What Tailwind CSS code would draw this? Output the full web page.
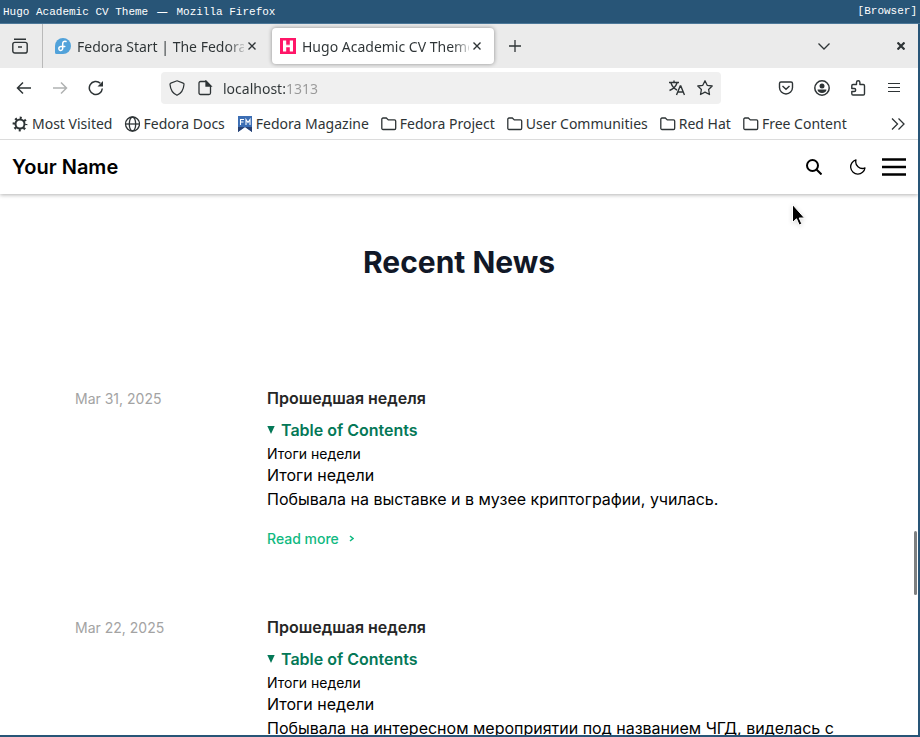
<!DOCTYPE html>
<html lang="en">
<head>
<meta charset="utf-8">
<title>Hugo Academic CV Theme</title>
<script src="https://cdn.jsdelivr.net/npm/@tailwindcss/browser@4"></script>
</head>
<body class="h-screen overflow-hidden bg-[#285577] font-['Noto_Sans',sans-serif] text-[#2e3436]">
<svg class="hidden" aria-hidden="true">
  <symbol id="folder" viewBox="0 0 16 16"><path d="M.8 12.300V3.200c0-.7.5-1.200 1.200-1.200h3.300l2 1.900H13.500c.7 0 1.200.5 1.200 1.200v7.200c0 .7-.5 1.200-1.200 1.200H2c-.7 0-1.200-.5-1.200-1.200z" fill="none" stroke="currentColor" stroke-width="1.300"/></symbol>
  <symbol id="close" viewBox="0 0 8 8"><path d="M.5.5l7 7M7.500.500l-7 7" stroke="currentColor" stroke-width="1.400"/></symbol>
</svg>
<div class="flex h-full flex-col">
  <header class="flex h-6 shrink-0 items-center justify-between border-b border-[#4c7899] px-[3px] font-['Liberation_Mono',monospace] text-[11px] leading-none text-white">
    <div>Hugo Academic CV Theme <span class="px-0.5 font-['Noto_Sans',sans-serif]">—</span> Mozilla Firefox</div>
    <div>[Browser]</div>
  </header>

  <div class="relative mr-[2px] mb-[2px] flex min-h-0 flex-1 flex-col overflow-hidden bg-white">
    <div class="flex h-11 shrink-0 items-center bg-[#ebebeb] text-sm">
      <button class="flex h-full w-[43px] items-center justify-center border-r border-[#b9b9b9] pr-0.5" aria-label="Recent browsing">
        <svg class="size-4" viewBox="0 0 16 16" fill="none" stroke="currentColor" stroke-width="1.400"><path d="M2 1.200h12M.8 6.500c0-1.200.9-2.100 2.100-2.100h10.200c1.200 0 2.100.9 2.100 2.100v6.400c0 1.200-.9 2.100-2.100 2.100H2.900c-1.200 0-2.100-.9-2.100-2.100zM6 9h4"/></svg>
      </button>
      <div class="ml-1 flex h-9 w-[221px] items-center pr-3 pl-2">
        <svg class="size-4 shrink-0" viewBox="0 0 16 16"><path d="M8 0a8 8 0 1 1 0 16H1.500A1.500 1.500 0 0 1 0 14.500V8a8 8 0 0 1 8-8z" fill="#51a2da"/><path d="M11 3.500c-1.900-.6-3.300.4-3.300 2.200v4.500c0 1.600-1.200 2.500-2.500 2.200C3.500 12 3.300 9.500 5 8.700c.6-.3 1-.2 1.500-.2h3.300" fill="none" stroke="#fff" stroke-width="1.500" stroke-linecap="round"/></svg>
        <a href="#" class="ml-1.5 min-w-0 flex-1 overflow-hidden bg-[linear-gradient(90deg,#2e3436_90%,#2e343633)] bg-clip-text pt-0.5 whitespace-nowrap text-transparent">Fedora Start | The Fedora</a>
        <button class="ml-1" aria-label="Close tab"><svg class="size-2"><use href="#close"/></svg></button>
      </div>
      <div class="ml-1 flex h-9 w-[222px] items-center rounded bg-white pr-[13px] pl-2 shadow-[0_0_4px_rgba(0,0,0,0.4)]">
        <svg class="size-4 shrink-0" viewBox="0 0 16 16"><path d="M0 0h16v16H0z" fill="#ff1668"/><path d="M3 2.500h3.200v4.300h3.600V2.500H13v11H9.800V9.200H6.200v4.300H3z" fill="#fff"/><path d="M6.200 7.300h3.600" stroke="#ff8fb5" stroke-width=".5"/></svg>
        <a href="#" aria-current="page" class="ml-1.5 min-w-0 flex-1 overflow-hidden bg-[linear-gradient(90deg,#2e3436_90%,#2e343633)] bg-clip-text pt-0.5 whitespace-nowrap text-transparent">Hugo Academic CV Theme</a>
        <button class="ml-1" aria-label="Close tab"><svg class="size-2"><use href="#close"/></svg></button>
      </div>
      <button class="ml-[15px]" aria-label="New tab"><svg class="size-3" viewBox="0 0 12 12" stroke="currentColor" stroke-width="1.300"><path d="M6 0v12M0 6h12"/></svg></button>
      <button class="ml-auto" aria-label="List all tabs"><svg class="h-[7px] w-3" viewBox="0 0 12 7" fill="none" stroke="currentColor" stroke-width="1.300"><path d="M.5.5L6 6l5.500-5.500"/></svg></button>
      <button class="mr-[13px] ml-[67px]" aria-label="Close window"><svg class="size-2" viewBox="0 0 8 8" stroke="currentColor" stroke-width="2.200"><path d="M.5.5l7 7M7.500.500l-7 7"/></svg></button>
    </div>

    <div class="flex h-10 shrink-0 items-center px-1.5">
      <button class="flex w-9 justify-center" aria-label="Back"><svg class="size-4" viewBox="0 0 16 16" fill="none" stroke="currentColor" stroke-width="1.500"><path d="M15 8H1.500M7 2.500L1.500 8 7 13.500"/></svg></button>
      <button class="flex w-9 justify-center text-[#b0b2b2]" aria-label="Forward" disabled><svg class="size-4" viewBox="0 0 16 16" fill="none" stroke="currentColor" stroke-width="1.500"><path d="M1 8h13.500M9 2.500L14.500 8 9 13.500"/></svg></button>
      <button class="flex w-9 justify-center" aria-label="Reload"><svg class="size-4" viewBox="0 0 16 16" fill="none" stroke="currentColor" stroke-width="1.500"><path d="M14.300 8.500A6.500 6.500 0 1 1 12.300 3.300"/><path d="M15 1v5.500H9.500z" fill="currentColor" stroke="none"/></svg></button>
      <div class="mx-[47px] flex h-8 min-w-0 flex-1 items-center rounded bg-[#f0f0f0] px-2">
        <svg class="size-4 shrink-0" viewBox="0 0 16 16" fill="none" stroke="currentColor" stroke-width="1.200"><path d="M8 .800l6.200 2.300c.6.200.9.700.8 1.300C14.600 9.500 12 13.500 8 15.300 4 13.500 1.400 9.500 1 4.400c0-.6.200-1.100.8-1.300z"/></svg>
        <svg class="ml-3 size-4 shrink-0" viewBox="0 0 16 16" fill="none" stroke="currentColor" stroke-width="1.300"><path d="M3.500 1.500H9l4.500 4.500v7c0 .8-.700 1.500-1.500 1.500H3.500C2.700 14.500 2 13.800 2 13V3c0-.8.7-1.500 1.500-1.500z"/><path d="M9 1v5h5z" fill="currentColor"/></svg>
        <input type="text" aria-label="Address" value="localhost:1313" class="ml-[10px] min-w-0 flex-1 bg-[linear-gradient(90deg,#2e3436_62px,#999999_62px)] bg-clip-text pt-0.5 text-sm text-transparent outline-none">
        <button aria-label="Translate page"><svg class="size-4" viewBox="0 0 16 16" fill="none" stroke="currentColor" stroke-width="1.400"><path d="M0 2.500h10M5 .500v2M2 3c1 3 3 5.500 6 7M8 3c-1 3-3.500 6-7.500 7.500M7.500 15l3.700-9h.6l3.700 9M9 12h5"/></svg></button>
        <button class="ml-3" aria-label="Bookmark this page"><svg class="size-4" viewBox="0 0 16 16" fill="none" stroke="currentColor" stroke-width="1.300" stroke-linejoin="round"><path d="M8 .800l2.200 4.500 5 .700-3.600 3.500.9 5L8 12.100l-4.500 2.400.9-5L.800 6l5-.7z"/></svg></button>
      </div>
      <button class="flex w-9 justify-center" aria-label="Save to Pocket"><svg class="size-4" viewBox="0 0 16 16" fill="none" stroke="currentColor" stroke-width="1.400"><path d="M3 2h10c.9 0 1.500.6 1.500 1.500V7.500a6.500 6.500 0 0 1-13 0v-4C1.500 2.600 2.100 2 3 2zM4.500 6L8 9.300 11.500 6"/></svg></button>
      <button class="flex w-9 justify-center" aria-label="Account"><svg class="size-4" viewBox="0 0 16 16"><circle cx="8" cy="8" r="7.200" fill="none" stroke="currentColor" stroke-width="1.500"/><circle cx="8" cy="6" r="2.500" fill="currentColor"/><path d="M3.500 9.500h9c0 2-2 3.500-4.500 3.500s-4.500-1.500-4.500-3.500z" fill="currentColor"/></svg></button>
      <button class="flex w-9 justify-center" aria-label="Extensions"><svg class="size-4" viewBox="0 0 16 16" fill="none" stroke="currentColor" stroke-width="1.400" stroke-linejoin="round"><path d="M6.500 4.500V2.500a1.700 1.700 0 0 1 3.400 0v2h3.400c.7 0 1.200.5 1.200 1.200v8.100c0 .7-.5 1.200-1.200 1.200H3c-.7 0-1.200-.5-1.200-1.200v-2.300h2.400a1.500 1.500 0 0 0 0-3H1.800V5.700c0-.7.500-1.200 1.200-1.200z"/></svg></button>
      <button class="flex w-9 justify-center" aria-label="Menu"><svg class="size-4" viewBox="0 0 16 16" stroke="currentColor" stroke-width="1.200"><path d="M2 3.500h12M2 7.500h12M2 11.500h12"/></svg></button>
    </div>

    <nav aria-label="Bookmarks" class="flex h-8 shrink-0 items-center gap-3 border-b border-[#dcdcdc] pr-3 pl-3 text-sm whitespace-nowrap">
      <a href="#" class="flex items-center gap-1"><svg class="size-4" viewBox="0 0 16 16" fill="none" stroke="currentColor"><circle cx="8" cy="8" r="4.500" stroke-width="2"/><circle cx="8" cy="8" r="6.200" stroke-width="2.400" stroke-dasharray="2.035 2.835" stroke-dashoffset="1.018"/></svg>Most Visited</a>
      <a href="#" class="flex items-center gap-[3px]"><svg class="size-4" viewBox="0 0 16 16" fill="none" stroke="currentColor" stroke-width="1.300"><circle cx="8.500" cy="8" r="7"/><ellipse cx="8.500" cy="8" rx="3.200" ry="7"/><path d="M1.500 8h14"/></svg>Fedora Docs</a>
      <a href="#" class="flex items-center gap-[3px]"><svg class="size-4" viewBox="0 0 16 16"><path d="M1 0h14v16l-7-5-7 5z" fill="#3c6eb4"/><path d="M1 11h14v5l-7-5-7 5z" fill="#294172"/><path d="M3.500 9V3.500H7M3.500 6h3M9 9V3.500l2 3 2-3V9" fill="none" stroke="#fff" stroke-width="1.100"/></svg>Fedora Magazine</a>
      <a href="#" class="flex items-center gap-[3px]"><svg class="size-4"><use href="#folder"/></svg>Fedora Project</a>
      <a href="#" class="flex items-center gap-[3px]"><svg class="size-4"><use href="#folder"/></svg>User Communities</a>
      <a href="#" class="flex items-center gap-[3px]"><svg class="size-4"><use href="#folder"/></svg>Red Hat</a>
      <a href="#" class="flex items-center gap-[3px]"><svg class="size-4"><use href="#folder"/></svg>Free Content</a>
      <button class="ml-auto" aria-label="More bookmarks"><svg class="h-3 w-4" viewBox="0 0 16 12" fill="none" stroke="currentColor" stroke-width="1.300"><path d="M2 .500L7.500 6 2 11.500M8.500.500L14 6l-5.500 5.500"/></svg></button>
    </nav>

    <div class="flex min-h-0 flex-1 flex-col overflow-hidden font-['Inter',sans-serif] text-black">
      <header class="flex h-[54px] shrink-0 items-center pr-3 pl-3 shadow-[0_1px_4px_rgba(0,0,0,0.3)]">
        <a href="#" class="text-xl font-semibold">Your Name</a>
        <button class="mr-7 ml-auto" aria-label="Search"><svg class="size-4" viewBox="0 0 16 16" fill="none" stroke="currentColor" stroke-width="2"><circle cx="6.500" cy="6.500" r="5.500"/><path d="M10.500 10.500l5 5"/></svg></button>
        <button class="mr-4" aria-label="Toggle theme"><svg class="size-4" viewBox="0 0 16 16" fill="none" stroke="currentColor" stroke-width="1.300" stroke-linejoin="round"><path d="M6 .900a6.700 6.700 0 0 0 9 8A7.200 7.200 0 1 1 6 .900z"/></svg></button>
        <button aria-label="Open menu"><svg class="h-5 w-6" viewBox="0 0 24 20" stroke="currentColor" stroke-width="2.300"><path d="M0 2.500h24M0 10h24M0 17.500h24"/></svg></button>
      </header>
      <main>
        <h1 class="mt-12 text-center text-3xl leading-10 font-bold text-[#111827]">Recent News</h1>
        <div class="mx-auto mt-[104px] max-w-3xl">
          <article class="mb-16 grid grid-cols-4 items-baseline">
            <time class="text-sm leading-6 text-[#a3a3a3]" datetime="2025-03-31">Mar 31, 2025</time>
            <div class="col-span-3">
              <h2 class="leading-6 font-semibold text-[#262626]"><a href="#">Прошедшая неделя</a></h2>
              <details open class="mt-2">
                <summary class="flex list-none items-center gap-1.5 leading-6 font-semibold text-[#047857]"><svg class="size-2" viewBox="0 0 8 8"><path d="M.3 0h7.400L4 8z" fill="currentColor"/></svg>Table of Contents</summary>
                <p class="mt-0.5 text-sm leading-[19px]"><a href="#">Итоги недели</a></p>
              </details>
              <p class="leading-6">Итоги недели</p>
              <p class="leading-6">Побывала на выставке и в музее криптографии, училась.</p>
              <a href="#" class="mt-4 flex items-center text-sm leading-6 font-medium text-[#10b981]">Read more<svg class="ml-[10px] h-2 w-[5px]" viewBox="0 0 5 8" fill="none" stroke="currentColor" stroke-width="1.500"><path d="M1 1l3 2.500-3 2.500"/></svg></a>
            </div>
          </article>
          <article class="grid grid-cols-4 items-baseline">
            <time class="text-sm leading-6 text-[#a3a3a3]" datetime="2025-03-22">Mar 22, 2025</time>
            <div class="col-span-3">
              <h2 class="leading-6 font-semibold text-[#262626]"><a href="#">Прошедшая неделя</a></h2>
              <details open class="mt-2">
                <summary class="flex list-none items-center gap-1.5 leading-6 font-semibold text-[#047857]"><svg class="size-2" viewBox="0 0 8 8"><path d="M.3 0h7.400L4 8z" fill="currentColor"/></svg>Table of Contents</summary>
                <p class="mt-0.5 text-sm leading-[19px]"><a href="#">Итоги недели</a></p>
              </details>
              <p class="leading-6">Итоги недели</p>
              <p class="leading-6">Побывала на интересном мероприятии под названием ЧГД, виделась с</p>
            </div>
          </article>
        </div>
      </main>
    </div>
    <div class="absolute top-[507px] right-px h-16 w-[3px] rounded-full bg-[#7d7f80]"></div>
    <svg class="absolute top-[180px] left-[791px] h-6 w-4 drop-shadow-sm" viewBox="0 0 16 24"><path d="M1.500.500v18l4-3.700 2.700 6.200 2.600-1.200-2.600-5.800h5.300z" fill="#000" stroke="#fff" stroke-width="1"/></svg>
  </div>
</div>
</body>
</html>
